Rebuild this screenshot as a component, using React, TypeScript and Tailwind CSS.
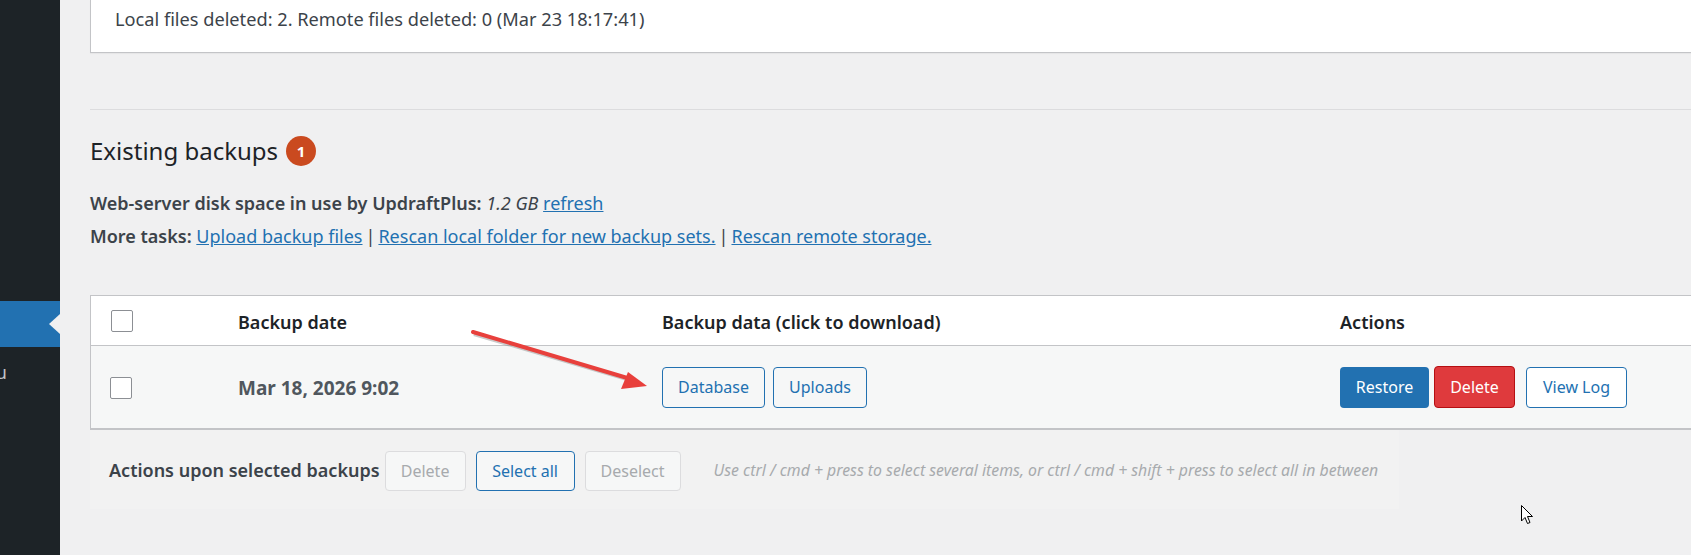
import React from "react";

const bodyFont = "font-['Noto_Sans','Open_Sans',sans-serif]";

function Checkbox() {
  return (
    <span className="block w-[22px] h-[22px] bg-white border border-[#8c8f94] rounded-[2px]" />
  );
}

function OutlineButton({ label, width }: { label: string; width: string }) {
  return (
    <button
      className={`${width} h-[41px] rounded-[4px] border border-[#2271b1] bg-[#f6f7f7] text-[#2271b1] text-[16px] leading-none`}
    >
      {label}
    </button>
  );
}

function BackupTable() {
  return (
    <div className="mt-[45px] mr-[-20px] border border-[#c3c4c7] bg-white">
      {/* header */}
      <div className="flex items-center h-[50px] border-b border-[#c3c4c7] text-[18px] font-semibold text-[#1d2327]">
        <div className="w-[147px] pl-[20px]">
          <Checkbox />
        </div>
        <div className="w-[424px] pt-[4px]">Backup date</div>
        <div className="w-[678px] pt-[4px]">Backup data (click to download)</div>
        <div className="flex-1 pt-[4px]">Actions</div>
      </div>

      {/* single backup set */}
      <div className="flex items-center h-[83px] border-b border-[#c3c4c7] bg-[#f6f7f7]">
        <div className="w-[147px] pl-[19px] pt-[2px]">
          <Checkbox />
        </div>
        <div className="w-[424px] pt-[2px] text-[19px] font-bold text-[#50575e]">
          Mar 18, 2026 9:02
        </div>
        <div className="w-[678px] flex gap-[8px]">
          <OutlineButton label="Database" width="w-[103px]" />
          <OutlineButton label="Uploads" width="w-[94px]" />
        </div>
        <div className="flex-1 flex items-center">
          <button className="w-[89px] h-[41px] rounded-[4px] bg-[#2271b1] text-white text-[16px]">
            Restore
          </button>
          <button className="ml-[5px] w-[81px] h-[42px] rounded-[4px] bg-[#df3a3d] border border-[#b50f12] text-white text-[16px]">
            Delete
          </button>
          <button className="ml-[11px] w-[101px] h-[41px] rounded-[4px] border border-[#2271b1] bg-white text-[#2271b1] text-[16px]">
            View Log
          </button>
        </div>
      </div>
    </div>
  );
}

export default function App() {
  return (
    <div
      className={`relative flex w-full h-[555px] overflow-hidden bg-[#f0f0f1] text-[#3c434a] ${bodyFont}`}
    >
      {/* admin menu, collapsed */}
      <aside className="w-[60px] shrink-0 bg-[#1d2327] pt-[301px]">
        <div className="relative h-[46px] bg-[#2271b1]">
          <span className="absolute right-0 top-[13px] w-0 h-0 border-y-[10px] border-y-transparent border-r-[11px] border-r-[#f0f0f1]" />
        </div>
        <div className="mt-[12px] w-[7px] h-[26px] overflow-hidden flex justify-end text-[18px] leading-[26px] text-[#c3c4c7]">
          <span className="whitespace-nowrap">Menu</span>
        </div>
      </aside>

      <main className="flex-1 pl-[30px]">
        {/* last log message */}
        <div className="h-[53px] mr-[-20px] bg-white border border-t-0 border-[#c3c4c7] pl-[24px] pt-[6px] text-[18.2px] leading-[26px] shadow-[0_1px_1px_rgba(0,0,0,0.04)]">
          Local files deleted: 2. Remote files deleted: 0 (Mar 23 18:17:41)
        </div>

        <div className="mt-[56px] mr-[-20px] border-t border-[#dcdcde]" />

        <div className="mt-[25px] flex items-center gap-[8px] h-[32px]">
          <h2 className="text-[24px] leading-[32px] text-[#1d2327]">Existing backups</h2>
          <span className="w-[30px] h-[30px] rounded-full bg-[#ca4a1f] text-white text-[15px] font-bold flex items-center justify-center">
            1
          </span>
        </div>

        <div className="mt-[22px] h-[28px] text-[18px] leading-[28px]">
          <strong className="font-semibold">Web-server disk space in use by UpdraftPlus:</strong>{" "}
          <em>1.2 GB</em>{" "}
          <a className="text-[#2271b1] underline">refresh</a>
        </div>
        <div className="mt-[5px] h-[28px] text-[18px] leading-[28px]">
          <strong className="font-semibold">More tasks:</strong>{" "}
          <a className="text-[#2271b1] underline">Upload backup files</a>
          <span className="mx-[3px]">|</span>
          <a className="text-[#2271b1] underline">Rescan local folder for new backup sets.</a>
          <span className="mx-[3px]">|</span>
          <a className="text-[#2271b1] underline">Rescan remote storage.</a>
        </div>

        <BackupTable />

        {/* bulk actions */}
        <div className="w-[1309px] h-[79px] bg-[#f2f2f2] flex items-center pl-[19px] pt-[2px]">
          <span className="text-[18px] font-semibold text-[#3c434a]">Actions upon selected backups</span>
          <button className="ml-[5px] w-[81px] h-[40px] rounded-[4px] border border-[#dcdcde] bg-[#f6f7f7] text-[#a7aaad] text-[16px]">
            Delete
          </button>
          <button className="ml-[10px] w-[99px] h-[40px] rounded-[4px] border border-[#2271b1] bg-[#f6f7f7] text-[#2271b1] text-[16px]">
            Select all
          </button>
          <button className="ml-[10px] w-[96px] h-[40px] rounded-[4px] border border-[#dcdcde] bg-[#f6f7f7] text-[#a7aaad] text-[16px]">
            Deselect
          </button>
          <span className="ml-[33px] italic text-[15.8px] text-[#a7aaad]">
            Use ctrl / cmd + press to select several items, or ctrl / cmd + shift + press to select all in between
          </span>
        </div>
      </main>

      {/* red pointer arrow */}
      <svg className="absolute left-0 top-0 pointer-events-none" width="1691" height="555">
        <line x1="474" y1="334" x2="634" y2="381" stroke="#8a8a8a" strokeOpacity="0.45" strokeWidth="4" />
        <line x1="473" y1="332" x2="634" y2="380" stroke="#e8403c" strokeWidth="4" strokeLinecap="round" />
        <polygon points="647,386 628,372 621,389" fill="#e8403c" />
      </svg>

      {/* mouse pointer */}
      <svg className="absolute left-[1521px] top-[505px]" width="13" height="20" viewBox="0 0 13 20">
        <path d="M0.5 0.5 L0.5 16 L4 12.5 L6.5 18.5 L9 17.5 L6.5 11.5 L11.5 11.5 Z" fill="#fff" stroke="#000" strokeWidth="1" strokeLinejoin="round" />
      </svg>
    </div>
  );
}
